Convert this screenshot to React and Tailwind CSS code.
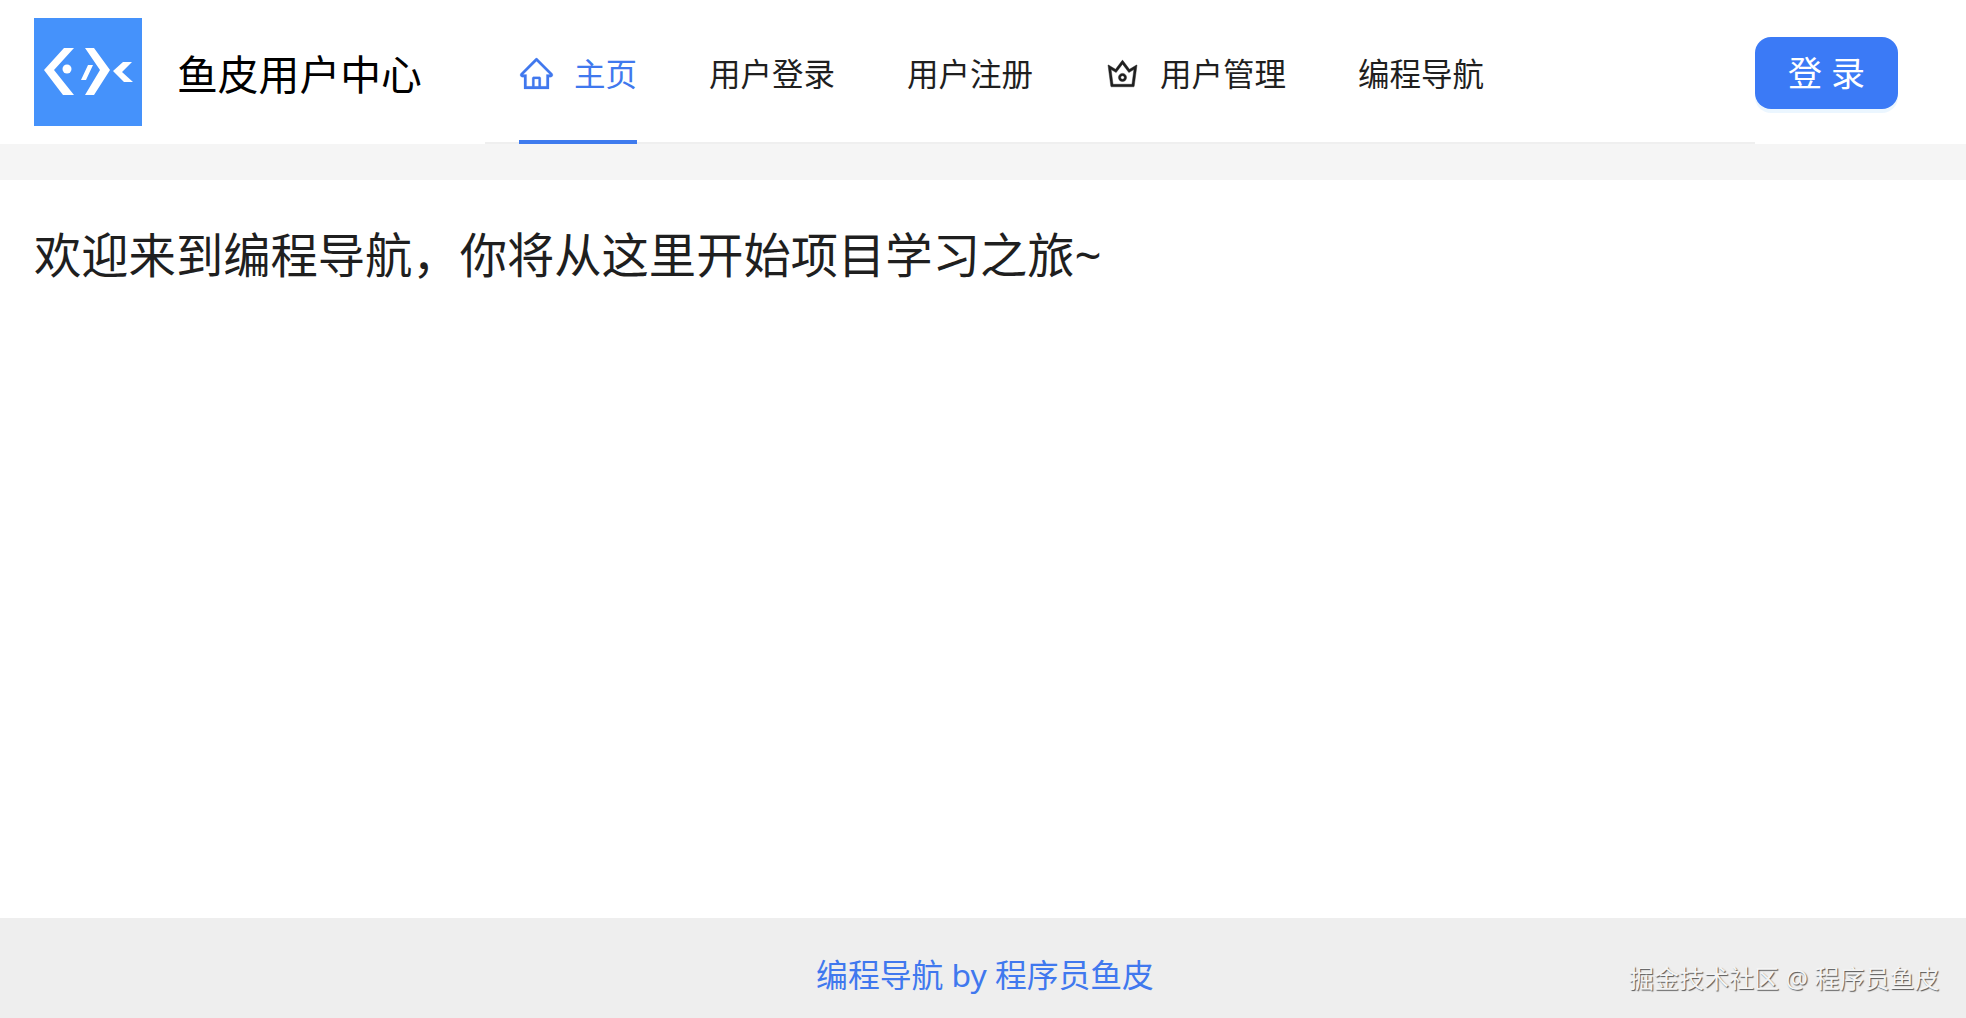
import { AiOutlineHome, AiOutlineCrown } from 'react-icons/ai';

const font = "font-['Noto_Sans','Noto_Sans_CJK_SC',sans-serif]";

function Logo() {
    return (
        <svg viewBox="0 0 108 108" className="w-[108px] h-[108px] shrink-0">
            <rect width="108" height="108" fill="#4592fb" />
            <g fill="#ffffff">
                <path d="M10 52 L30 30 L40 30 L20 52 L40 77 L29 77 Z" />
                <path d="M51 30 L60 30 L76 52 L60 77 L51 77 L66 52 Z" />
                <path d="M89 44 L98 44 L88 54 L99 64 L90 64 L79 53 Z" />
                <circle cx="33" cy="51" r="4.5" />
                <path d="M54 47 L59 47 L52 62 L47 62 Z" />
            </g>
        </svg>
    );
}

function NavItem({ icon, label, active }) {
    return (
        <a className={`relative flex items-center h-full px-9 pt-[5px] text-[31.5px] ${active ? 'text-[#4078ee]' : 'text-[#1f1f1f]'}`}>
            {icon && <span className="-ml-px mr-[19px] flex items-center">{icon}</span>}
            <span>{label}</span>
            {active && <span className="absolute left-9 right-9 -bottom-0.5 h-1 bg-[#3f7bee]" />}
        </a>
    );
}

export default function App() {
    return (
        <div className={`flex flex-col h-[1018px] bg-white ${font}`}>
            {/* Header */}
            <header className="flex items-center h-[144px] bg-white pr-[68px]">
                <div className="flex items-center w-[485px] h-full pl-[34px]">
                    <Logo />
                    <h1 className="ml-[35px] pt-[5px] text-[40.8px] text-black font-normal">鱼皮用户中心</h1>
                </div>
                <nav className="flex-1 h-full border-b-2 border-[#efefef]">
                    <div className="flex h-full -ml-0.5">
                        <NavItem active icon={<AiOutlineHome size={37} stroke="currentColor" strokeWidth={6} />} label="主页" />
                        <NavItem label="用户登录" />
                        <NavItem label="用户注册" />
                        <NavItem icon={<AiOutlineCrown size={37} stroke="currentColor" strokeWidth={12} />} label="用户管理" />
                        <NavItem label="编程导航" />
                    </div>
                </nav>
                <button className="mt-0.5 w-[143px] h-[72px] rounded-2xl bg-[#3b7af6] text-white text-[34px] shadow-[0_4px_0_rgba(5,145,255,0.08)]">
                    登 录
                </button>
            </header>

            <div className="h-9 bg-[#f5f5f5]" />

            {/* Content */}
            <main className="flex-1 bg-white px-[34px] pt-[40px]">
                <p className="text-[47.3px] leading-[70px] text-[#1f1f1f]">欢迎来到编程导航，你将从这里开始项目学习之旅~</p>
            </main>

            {/* Footer */}
            <footer className="relative flex items-center justify-center h-[100px] bg-[#eeeeee] pt-[14px] pl-1 text-[31.8px] text-[#4078ee]">
                <a>编程导航 by 程序员鱼皮</a>
                <span className="absolute left-[1629px] top-[44px] text-[25px] leading-[32px] text-[#f4f4f4] [text-shadow:1px_1px_1px_#555]">
                    掘金技术社区 @ 程序员鱼皮
                </span>
            </footer>
        </div>
    );
}
